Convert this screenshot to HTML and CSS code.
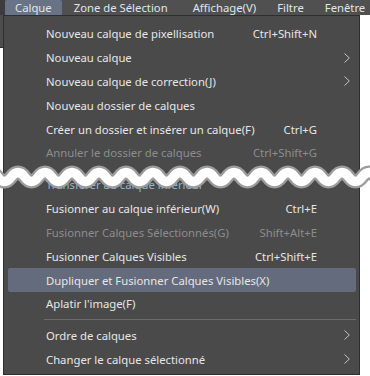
FILE: index.html
```html
<!DOCTYPE html>
<html lang="fr">
<head>
    <meta charset="UTF-8">
    <title>Calque</title>
    <link rel="stylesheet" href="styles.css">
</head>
<body>
    <div class="menubar">
        <span class="edge"></span>
        <span class="menu-title active">Calque</span>
        <span class="menu-title">Zone de Sélection</span>
        <span class="menu-title">Affichage(V)</span>
        <span class="menu-title">Filtre</span>
        <span class="menu-title">Fenêtre</span>
    </div>

    <div class="main">
        <div class="side"><div class="side-panel"></div></div>
        <div class="popup">
            <div class="item"><span class="label">Nouveau calque de pixellisation</span><span class="key">Ctrl+Shift+N</span><span class="sub"></span></div>
            <div class="item"><span class="label">Nouveau calque</span><span class="key"></span><span class="sub"><svg width="6" height="10" viewBox="0 0 6 10"><polyline points="0.5,0.5 5.3,5 0.5,9.5"/></svg></span></div>
            <div class="item"><span class="label">Nouveau calque de correction(J)</span><span class="key"></span><span class="sub"><svg width="6" height="10" viewBox="0 0 6 10"><polyline points="0.5,0.5 5.3,5 0.5,9.5"/></svg></span></div>
            <div class="item"><span class="label">Nouveau dossier de calques</span><span class="key"></span><span class="sub"></span></div>
            <div class="item"><span class="label">Créer un dossier et insérer un calque(F)</span><span class="key">Ctrl+G</span><span class="sub"></span></div>
            <div class="item disabled"><span class="label">Annuler le dossier de calques</span><span class="key">Ctrl+Shift+G</span><span class="sub"></span></div>

            <div class="cut"></div>

            <div class="item faded"><span class="label">Transférer au calque inférieur</span><span class="key"></span><span class="sub"></span></div>
            <div class="item"><span class="label">Fusionner au calque inférieur(W)</span><span class="key">Ctrl+E</span><span class="sub"></span></div>
            <div class="item disabled"><span class="label">Fusionner Calques Sélectionnés(G)</span><span class="key">Shift+Alt+E</span><span class="sub"></span></div>
            <div class="item"><span class="label">Fusionner Calques Visibles</span><span class="key">Ctrl+Shift+E</span><span class="sub"></span></div>
            <div class="item hover"><span class="label">Dupliquer et Fusionner Calques Visibles(X)</span><span class="key"></span><span class="sub"></span></div>
            <div class="item"><span class="label">Aplatir l'image(F)</span><span class="key"></span><span class="sub"></span></div>

            <div class="separator"></div>

            <div class="item"><span class="label">Ordre de calques</span><span class="key"></span><span class="sub"><svg width="6" height="10" viewBox="0 0 6 10"><polyline points="0.5,0.5 5.3,5 0.5,9.5"/></svg></span></div>
            <div class="item"><span class="label">Changer le calque sélectionné</span><span class="key"></span><span class="sub"><svg width="6" height="10" viewBox="0 0 6 10"><polyline points="0.5,0.5 5.3,5 0.5,9.5"/></svg></span></div>
        </div>
    </div>

    <!-- torn edge marking the cut in the screenshot -->
    <svg class="tear" width="370" height="30" viewBox="0 0 370 30">
        <path class="tear-edge" d="M-15.75,14 q6.75,-9 13.5,0 t13.5,0 t13.5,0 t13.5,0 t13.5,0 t13.5,0 t13.5,0 t13.5,0 t13.5,0 t13.5,0 t13.5,0 t13.5,0 t13.5,0 t13.5,0 t13.5,0 t13.5,0 t13.5,0 t13.5,0 t13.5,0 t13.5,0 t13.5,0 t13.5,0 t13.5,0 t13.5,0 t13.5,0 t13.5,0 t13.5,0 t13.5,0 t13.5,0 t13.5,0"/>
        <path class="tear-fill" d="M-15.75,14 q6.75,-9 13.5,0 t13.5,0 t13.5,0 t13.5,0 t13.5,0 t13.5,0 t13.5,0 t13.5,0 t13.5,0 t13.5,0 t13.5,0 t13.5,0 t13.5,0 t13.5,0 t13.5,0 t13.5,0 t13.5,0 t13.5,0 t13.5,0 t13.5,0 t13.5,0 t13.5,0 t13.5,0 t13.5,0 t13.5,0 t13.5,0 t13.5,0 t13.5,0 t13.5,0 t13.5,0"/>
    </svg>
</body>
</html>
```

FILE: styles.css
```css
body {
    margin: 0;
    background-color: #fff;
    font-family: "Noto Sans", "Open Sans", sans-serif;
    font-size: 11.3px;
    color: #e6e6e6;
    width: 370px;
    height: 376px;
    overflow: hidden;
    position: relative;
}
.menubar {
    display: flex;
    height: 15px;
    line-height: 15px;
    background-color: #505050;
    white-space: nowrap;
    overflow: hidden;
}
.menubar .edge {
    flex: none;
    width: 5px;
    background-color: #3c3c3c;
}
.menu-title {
    flex: none;
    padding: 0 10px;
    margin-right: 3px;
    color: #dfe6ee;
}
.menu-title.active {
    background-color: #6a7285;
    border-radius: 2px 2px 0 0;
}
.menu-title:nth-child(3) {
    margin-left: -1px;
}
.menu-title:nth-child(4) {
    margin-left: 2px;
}
.menu-title:nth-child(5) {
    margin-left: -2px;
}
.menu-title:nth-child(6) {
    margin-left: -2px;
}
.main {
    display: flex;
}
.side {
    width: 3px;
    flex: none;
}
.side-panel {
    height: 32px;
    background-color: #4e4e4e;
    border-bottom: 1px solid #2e2e2e;
}
.popup {
    width: 355px;
    background-color: #4a4a4a;
    border: 1px solid #2e2e2e;
    padding: 6px 0 3px 0;
}
.item {
    display: flex;
    align-items: center;
    height: 23.8px;
    margin: 0 3px 0 4px;
    padding-left: 38px;
    border-radius: 2px;
    white-space: nowrap;
}
.item .label {
    flex: 1;
}
.item .key {
    text-align: right;
}
.item .sub {
    width: 39px;
    flex: none;
    display: flex;
    align-items: center;
    padding-left: 27px;
    box-sizing: border-box;
}
.item .sub svg {
    fill: none;
    stroke: #c4c4c4;
    stroke-width: 1;
}
.item.disabled {
    color: #8b8d90;
}
.item.faded {
    color: #93b4cf;
}
.item.hover {
    background-color: #646b7d;
}
.cut {
    height: 8.3px;
}
.separator {
    height: 7.6px;
    margin: 0 3px 0 40px;
    position: relative;
}
.separator::after {
    content: "";
    position: absolute;
    left: 0;
    right: 0;
    top: 3px;
    border-top: 1px solid #6c6c6c;
}
.tear {
    position: absolute;
    left: 0;
    top: 163px;
}
.tear-edge {
    fill: none;
    stroke: #9c9c9c;
    stroke-width: 14;
}
.tear-fill {
    fill: none;
    stroke: #fff;
    stroke-width: 9.5;
}
```
